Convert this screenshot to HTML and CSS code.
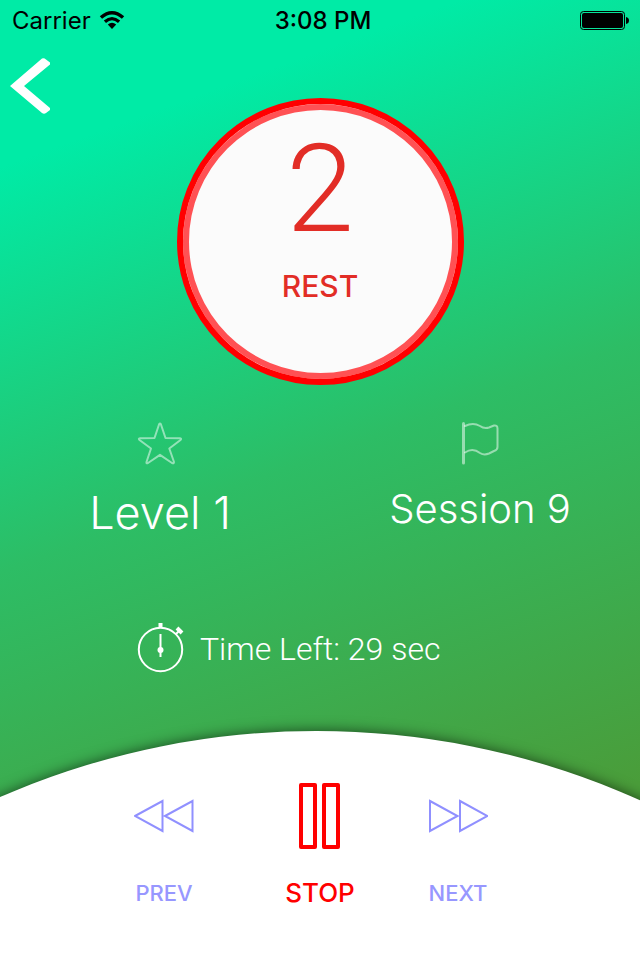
FILE: index.html
```html
<!DOCTYPE html>
<html lang="en">
  <head>
    <meta charset="UTF-8" />
    <meta name="viewport" content="width=device-width, initial-scale=1.0" />
    <title>Workout Timer</title>
    <link rel="stylesheet" href="styles.css">
  </head>
  <body>
    <div class="screen">
      <header class="status-bar">
        <div class="carrier">
          <span>Carrier</span>
          <svg class="wifi" viewBox="0 0 26 20" width="26" height="20" aria-hidden="true">
            <path d="M.8 6.200Q13 -4.200 25.200 6.200L22.900 8.700Q13 .2 3.100 8.700Z" />
            <path d="M4.800 10.400Q13 3.400 21.200 10.400L19 12.900Q13 7.500 7 12.900Z" />
            <path d="M8.800 14.600Q13 11 17.200 14.600L13 19Z" />
          </svg>
        </div>
        <div class="clock">3:08 PM</div>
        <svg class="battery" viewBox="0 0 50 20" width="50" height="20" aria-label="Battery full">
          <rect x=".5" y="1.500" width="44" height="18" rx="3" fill="none" stroke="#000" />
          <rect x="2" y="3" width="41" height="15" rx="2" />
          <path d="M46 7Q49 7.500 49 10.500T46 14Z" />
        </svg>
      </header>

      <main>
        <button class="back" type="button" aria-label="Back">
          <svg viewBox="0 0 40 56" width="40" height="56">
            <path d="M0 28L32 0.500Q34 -0.500 36 1.500L40 4.500V6.500L14 28L40 50V52L36 55Q34 56.500 32 55Z" fill="#fff" />
          </svg>
        </button>

        <div class="dial">
          <div class="count">2</div>
          <div class="phase">REST</div>
        </div>

        <div class="stats">
          <div class="stat level">
            <svg viewBox="0 0 46 44" width="46" height="44" aria-hidden="true">
              <path d="M22.200 3Q23 1.800 23.800 3L28.500 17L43 17.200Q45 17.500 43.500 19L32.300 27.500L37 41Q37 43 35 42L23 33.800L11 42Q9 43 9.500 41L14 27.500L2.500 19Q1 17.500 3 17.200L17.500 17Z" />
            </svg>
            <span>Level 1</span>
          </div>
          <div class="stat session">
            <svg viewBox="0 0 38 44" width="38" height="44" aria-hidden="true">
              <path class="pole" d="M2.500 2.500V42" />
              <path d="M4 5C10 2 14 2 19 5Q23 8 28 6.500L33 4.500Q36.500 4 36.500 7.500V26Q36.500 29 33 30L28 32.500Q23 34.500 19 32C14 28 9 28 4 31.500" />
            </svg>
            <span>Session 9</span>
          </div>
        </div>

        <div class="time-left">
          <svg viewBox="0 0 48 52" width="48" height="52" aria-hidden="true">
            <circle cx="23.500" cy="28.500" r="21.700" />
            <path d="M23.500 13V36" />
            <path class="thick" d="M23.500 2V7M40 7L45 12" />
            <path d="M38.500 13.500L42.500 9.500" />
            <circle class="hub" cx="23.500" cy="29" r="3" />
          </svg>
          <span>Time Left: 29 sec</span>
        </div>
      </main>

      <footer class="controls">
        <button class="control prev" type="button">
          <svg viewBox="0 0 60 66" width="60" height="66" aria-hidden="true">
            <path d="M1 33L28.500 18V48ZM31 33L58.500 18V48Z" />
          </svg>
          <span>PREV</span>
        </button>
        <button class="control stop" type="button">
          <svg viewBox="0 0 42 66" width="42" height="66" aria-hidden="true">
            <path d="M2 2H16V64H2ZM25 2H39V64H25Z" />
          </svg>
          <span>STOP</span>
        </button>
        <button class="control next" type="button">
          <svg viewBox="0 0 60 66" width="60" height="66" aria-hidden="true">
            <path d="M2 18L29.500 33L2 48ZM32 18L59.500 33L32 48Z" />
          </svg>
          <span>NEXT</span>
        </button>
      </footer>
    </div>
  </body>
</html>
```

FILE: styles.css
```css
* {
  box-sizing: border-box;
}
body {
  margin: 0;
  font-family: Inter, "Liberation Sans", sans-serif;
  font-weight: 300;
}
button {
  padding: 0;
  border: 0;
  background: none;
  font: inherit;
  cursor: pointer;
}
svg {
  display: block;
}
.screen {
  position: relative;
  display: flex;
  flex-direction: column;
  min-height: 100vh;
  overflow: hidden;
  background: linear-gradient(160deg, #00eba6 14%, #2dbd65 48%, #4a9d3a 85%);
}

/* status bar */
.status-bar {
  display: grid;
  grid-template-columns: 1fr auto 1fr;
  align-items: center;
  height: 40px;
  padding: 0 10px 0 12px;
  font-size: 24px;
  font-weight: 400;
}
.carrier {
  display: flex;
  align-items: center;
  gap: 8px;
}
.clock {
  padding-left: 4px;
  font-weight: 500;
}
.battery {
  justify-self: end;
}

main {
  flex: 1;
  display: flex;
  flex-direction: column;
  color: #fff;
}
.back {
  align-self: flex-start;
  margin: 18px 0 0 10px;
}
.dial {
  align-self: center;
  width: 287px;
  height: 287px;
  margin-top: -16px;
  padding-top: 20px;
  border: 6px solid #ff0000;
  border-radius: 50%;
  background: #fbfbfb;
  box-shadow: inset 0 0 0 6px #ff5154;
  color: #e22d26;
  text-align: center;
}
.count {
  font-family: Roboto, "Liberation Sans", sans-serif;
  font-size: 122px;
  font-weight: 300;
  line-height: 132px;
}
.phase {
  margin-top: 10px;
  font-size: 30px;
  font-weight: 500;
  line-height: 40px;
}

.stats {
  display: grid;
  grid-template-columns: 1fr 1fr;
  margin-top: 36px;
}
.stat {
  display: flex;
  flex-direction: column;
  align-items: center;
}
.stat svg {
  fill: none;
  stroke: rgba(255, 255, 255, 0.5);
  stroke-width: 2;
  stroke-linejoin: round;
  stroke-linecap: round;
}
.stat .pole {
  stroke-width: 3;
}
.stat span {
  margin-top: 20px;
}
.level {
  font-size: 45px;
  line-height: 56px;
}
.session {
  font-size: 40px;
  line-height: 48px;
}

.time-left {
  display: flex;
  align-items: center;
  gap: 15px;
  margin: 80px 0 0 137px;
  font-family: Roboto, "Liberation Sans", sans-serif;
  font-size: 32px;
  font-weight: 300;
}
.time-left span {
  padding-top: 4px;
}
.time-left svg {
  fill: none;
  stroke: #fff;
  stroke-width: 2;
}
.time-left .thick {
  stroke-width: 4;
}
.time-left .hub {
  fill: #fff;
  stroke: none;
}

/* white dome with the player buttons */
.controls {
  position: relative;
  display: grid;
  grid-template-columns: 1fr 84px 1fr;
  align-items: start;
  column-gap: 66px;
  padding: 52px 0 51px;
}
.controls::before {
  content: "";
  position: absolute;
  top: 0;
  left: -74%;
  width: 247%;
  aspect-ratio: 1;
  border-radius: 50%;
  background: #fff;
  box-shadow: 0 0 14px rgba(0, 0, 0, 0.6);
}
.control {
  position: relative;
  display: flex;
  flex-direction: column;
  align-items: center;
  gap: 28px;
  color: #9797ff;
  font-size: 22px;
  font-weight: 500;
  line-height: 32px;
}
.control svg {
  fill: none;
  stroke: #9090ff;
  stroke-width: 2;
}
.prev {
  justify-self: end;
  margin-right: 18px;
}
.next {
  justify-self: start;
}
.stop {
  color: #ff0000;
  font-size: 26px;
}
.stop svg {
  stroke: #ff0000;
  stroke-width: 4;
  stroke-linejoin: round;
}
```
